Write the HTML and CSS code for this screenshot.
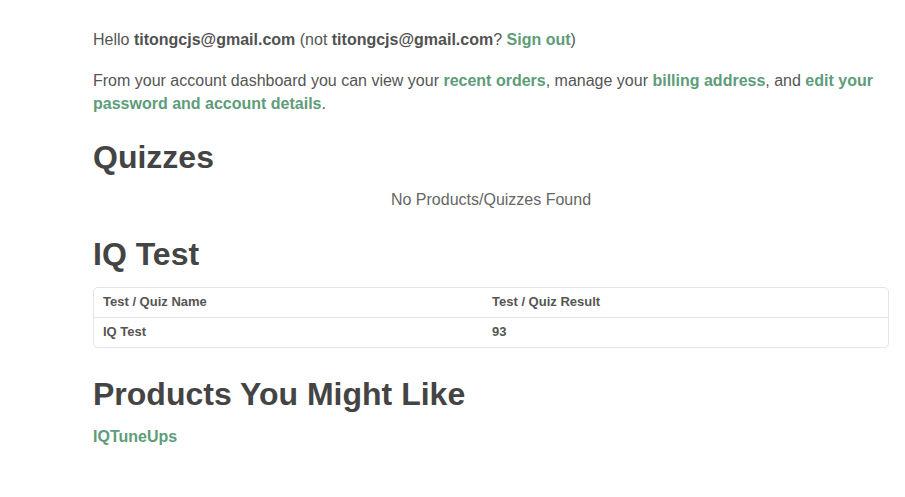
FILE: index.html
```html
<!DOCTYPE html>
<html>
<head>
<meta charset="utf-8">
<link rel="stylesheet" href="styles.css">
</head>
<body>
<div class="content">
  <p class="hello">Hello <strong>titongcjs@gmail.com</strong> (not <strong>titongcjs@gmail.com</strong>? <a href="#">Sign out</a>)</p>
  <p class="intro">From your account dashboard you can view your <a href="#">recent orders</a>, manage your <a href="#">billing address</a>, and <a href="#">edit your password and account details</a>.</p>
  <h2 class="h-quizzes">Quizzes</h2>
  <p class="empty">No Products/Quizzes Found</p>
  <h2 class="h-iq">IQ Test</h2>
  <table class="results">
    <thead>
      <tr><th class="c1">Test / Quiz Name</th><th>Test / Quiz Result</th></tr>
    </thead>
    <tbody>
      <tr><td class="c1">IQ Test</td><td>93</td></tr>
    </tbody>
  </table>
  <h2 class="h-products">Products You Might Like</h2>
  <p class="product"><a href="#">IQTuneUps</a></p>
</div>
</body>
</html>
```

FILE: styles.css
```css
html, body {
  margin: 0;
  padding: 0;
  background: #fff;
}
body {
  font-family: "Liberation Sans", Arial, sans-serif;
  font-size: 16px;
  line-height: 23px;
  color: #555;
}
.content {
  width: 796px;
  margin-left: 93px;
  padding-top: 28px;
}
p {
  margin: 0;
}
strong {
  font-weight: bold;
  color: #515151;
}
a {
  color: #5e9c7a;
  font-weight: bold;
  text-decoration: none;
}
.hello {
  margin-bottom: 18px;
}
h2 {
  font-size: 32px;
  line-height: 38px;
  font-weight: bold;
  color: #444;
  margin: 0;
}
.h-quizzes {
  margin-top: 23px;
}
.empty {
  text-align: center;
  color: #666;
  margin-top: 12px;
  line-height: 24px;
}
.h-iq {
  margin-top: 23px;
}
.results {
  width: 100%;
  margin-top: 14px;
  border: 1px solid #e4e4e4;
  border-radius: 5px;
  border-collapse: separate;
  border-spacing: 0;
  font-size: 13px;
  line-height: 16px;
  color: #555;
}
.results th, .results td {
  text-align: left;
  font-weight: bold;
  padding: 6px 9px 7px;
}
.results th {
  border-bottom: 1px solid #e4e4e4;
}
.results .c1 {
  width: 371px;
}
.h-products {
  margin-top: 27px;
}
.product {
  margin-top: 12px;
  line-height: 24px;
}
```
